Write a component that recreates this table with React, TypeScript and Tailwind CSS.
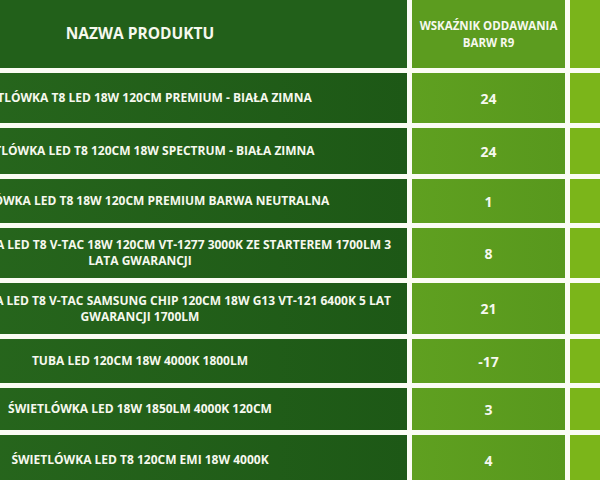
import React from 'react'

const rows = [
  { name: ['ŚWIETLÓWKA T8 LED 18W 120CM PREMIUM - BIAŁA ZIMNA'], r9: '24' },
  { name: ['ŚWIETLÓWKA LED T8 120CM 18W SPECTRUM - BIAŁA ZIMNA'], r9: '24' },
  { name: ['ŚWIETLÓWKA LED T8 18W 120CM PREMIUM BARWA NEUTRALNA'], r9: '1' },
  { name: ['TUBA LED T8 V-TAC 18W 120CM VT-1277 3000K ZE STARTEREM 1700LM 3', 'LATA GWARANCJI'], r9: '8' },
  { name: ['TUBA LED T8 V-TAC SAMSUNG CHIP 120CM 18W G13 VT-121 6400K 5 LAT', 'GWARANCJI 1700LM'], r9: '21' },
  { name: ['TUBA LED 120CM 18W 4000K 1800LM'], r9: '-17' },
  { name: ['ŚWIETLÓWKA LED 18W 1850LM 4000K 120CM'], r9: '3' },
  { name: ['ŚWIETLÓWKA LED T8 120CM EMI 18W 4000K'], r9: '4' },
]

const App: React.FC = () => {
  return (
    <div className="w-[600px] h-[480px] overflow-hidden bg-[#fbfcf4] font-['Open_Sans',sans-serif] text-[#f6f8ee]">
      <div className="ml-[-127px] grid grid-cols-[534px_153px_120px] grid-rows-[68px_50px_46px_44px_50px_51px_44px_42px_50px] gap-[5px]">
        <div className="bg-[#22601a] flex items-center justify-center text-[15.5px] font-bold">
          NAZWA PRODUKTU
        </div>
        <div className="bg-[#5c9c1f] flex items-center justify-center text-center text-[11.5px] font-bold leading-[17px]">
          WSKAŹNIK ODDAWANIA
          <br />
          BARW R9
        </div>
        <div className="bg-[#7ab41b]" />

        {rows.map((row, i) => (
          <React.Fragment key={i}>
            <div className="bg-gradient-to-r from-[#29691e] to-[#1d5816] flex flex-col justify-center px-[16px] text-[12px] font-bold leading-[16px] whitespace-nowrap">
              {row.name.length === 1 ? (
                <div className="text-center">{row.name[0]}</div>
              ) : (
                <>
                  <div className="text-right">{row.name[0]}</div>
                  <div className="text-center">{row.name[1]}</div>
                </>
              )}
            </div>
            <div className="bg-gradient-to-r from-[#5fa020] to-[#58981d] flex items-center justify-center text-[14px] font-bold">
              {row.r9}
            </div>
            <div className="bg-[#7bb51a]" />
          </React.Fragment>
        ))}
      </div>
    </div>
  )
}

export default App
